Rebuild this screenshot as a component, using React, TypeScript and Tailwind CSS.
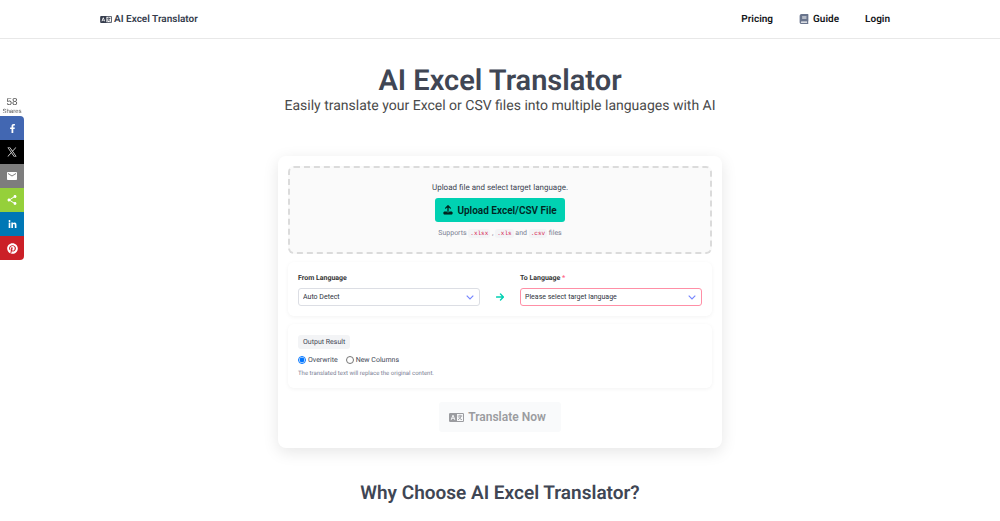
import { useState } from "react";
import type { ReactNode } from "react";
import { FaBook, FaFacebookF, FaLinkedinIn, FaPinterest } from "react-icons/fa";
import { MdEmail, MdShare } from "react-icons/md";

function XLogo() {
  return (
    <svg viewBox="0 0 24 24" className="size-[10px]" fill="currentColor" aria-hidden="true">
      <path d="M14.1 10.3 22.3 1h-1.9l-7.1 8.1L7.6 1H1l8.6 12.2L1 23h1.9l7.5-8.6 6 8.6H23zm-2.7 3-.9-1.2L3.6 2.4h3l5.6 7.8.9 1.2 7.3 10.2h-3z" />
    </svg>
  );
}

function UploadIcon() {
  return (
    <svg viewBox="0 0 20 20" className="size-[10px]" fill="none" stroke="currentColor" strokeWidth="2.6" strokeLinecap="round" strokeLinejoin="round" aria-hidden="true">
      <path d="M10 12.5V2M5.2 6.2 10 1.6l4.8 4.6" />
      <path d="M7.2 13.6H2.8A1.5 1.5 0 0 0 1.3 15v2.2a1.5 1.5 0 0 0 1.5 1.5h14.4a1.5 1.5 0 0 0 1.5-1.5V15a1.5 1.5 0 0 0-1.5-1.4h-4.4l-1 1.4H8.2z" fill="currentColor" strokeWidth="1" />
    </svg>
  );
}

function TranslateIcon({ className }: { className: string }) {
  return (
    <svg viewBox="0 0 30 18" className={className} aria-hidden="true">
      <path
        fill="currentColor"
        fillRule="evenodd"
        d="M2.5 0h25A2.5 2.5 0 0 1 30 2.5v13a2.5 2.5 0 0 1-2.5 2.5h-25A2.5 2.5 0 0 1 0 15.5v-13A2.5 2.5 0 0 1 2.5 0zM16 2v14h11.5a.5.5 0 0 0 .5-.5v-13a.5.5 0 0 0-.5-.5zM7.1 4 3.4 13.6h2.1l.7-2h3.6l.7 2h2.1L8.9 4zM8 6.6l1.2 3.4H6.8z"
      />
      <path d="M18.2 6h7.6M22 4.2V6M24.2 6c-.5 3-2.6 5.800-5.6 7.2M19.8 8.600c1 2 2.9 3.7 5.4 4.6" fill="none" stroke="currentColor" strokeWidth="1.8" strokeLinecap="round" />
    </svg>
  );
}

const shares: { name: string; color: string; icon: ReactNode }[] = [
  { name: "Facebook", color: "bg-[#4267b2] rounded-tr-sm", icon: <FaFacebookF className="size-[9px]" /> },
  { name: "X", color: "bg-black", icon: <XLogo /> },
  { name: "Email", color: "bg-[#7d7d7d]", icon: <MdEmail className="size-3" /> },
  { name: "Share", color: "bg-[#95d03a]", icon: <MdShare className="size-3" /> },
  { name: "LinkedIn", color: "bg-[#0077b5]", icon: <FaLinkedinIn className="size-[9px]" /> },
  { name: "Pinterest", color: "bg-[#cb2027] rounded-br-sm", icon: <FaPinterest className="size-[11px]" /> },
];

function ShareBar() {
  return (
    <aside className="fixed top-24 left-0 flex w-6 flex-col font-['Liberation_Sans',sans-serif] text-[#555]">
      <div className="flex h-5 flex-col items-center">
        <span className="text-[10px] leading-[14px]">58</span>
        <span className="text-[6px] leading-[4px]">Shares</span>
      </div>
      {shares.map((s) => (
        <button key={s.name} type="button" aria-label={s.name} className={`flex h-6 w-full items-center justify-center text-white ${s.color}`}>
          {s.icon}
        </button>
      ))}
    </aside>
  );
}

function LanguageSelect({ id, label, placeholder, options, required }: { id: string; label: string; placeholder: string; options: string[]; required?: boolean }) {
  return (
    <div className="min-w-0 flex-1">
      <label htmlFor={id} className="block text-[7px] leading-3 font-bold text-[#363636]">
        {label}
        {required && <span className="text-[#ff6685]"> *</span>}
      </label>
      <div className="relative mt-1">
        <select
          id={id}
          defaultValue=""
          className={`block h-[18px] w-full appearance-none rounded-[3px] border bg-white px-1 text-[7px] leading-4 text-[#2e333d] ${required ? "border-[#ff8fa6]" : "border-[#dcdee4]"}`}
        >
          <option value="">{placeholder}</option>
          {options.map((o) => (
            <option key={o}>{o}</option>
          ))}
        </select>
        <svg viewBox="0 0 8 5" className="pointer-events-none absolute top-[7px] right-1.5 h-[5px] w-2" fill="none" stroke="#7585ff" strokeWidth="1.1" aria-hidden="true">
          <path d="m.7.7 3.3 3.3L7.3.7" />
        </svg>
      </div>
    </div>
  );
}

const panel = "rounded-md bg-white px-[10px] shadow-[0_1px_4px_rgba(10,10,10,0.05)]";
const codeTag = "rounded-[3px] bg-[#f3f4f6] px-0.5 py-px font-['Liberation_Mono',monospace] text-[6px] text-[#d6204e]";

export default function App() {
  const [mode, setMode] = useState("overwrite");
  return (
    <div className="min-h-screen bg-white font-[Roboto,sans-serif] text-[#404654] [text-rendering:geometricPrecision]">
      <header className="border-b border-[#e8e8e8]">
        <div className="mx-auto flex h-[38px] w-4/5 items-center justify-between">
          <a href="#home" className="flex items-center gap-0.5 text-[10px] font-semibold text-[#363d4d]">
            <TranslateIcon className="h-[7px] w-3" />
            AI Excel Translator
          </a>
          <nav className="flex items-center gap-[26px] pr-[10px] text-[10px] font-semibold text-[#14161a]">
            <a href="#pricing">Pricing</a>
            <a href="#guide" className="flex items-center gap-1">
              <FaBook className="size-[10px] text-[#69748c]" />
              Guide
            </a>
            <a href="#login">Login</a>
          </nav>
        </div>
      </header>

      <ShareBar />

      <main className="flex flex-col items-center pt-[26px]">
        <h1 className="text-[29px] leading-8 font-semibold">AI Excel Translator</h1>
        <p className="text-[14px] leading-[18px] text-[#4a4a4a]">Easily translate your Excel or CSV files into multiple languages with AI</p>

        <form className="mt-[41px] w-full max-w-[444px] rounded-lg bg-white p-[10px] pb-4 shadow-[0_4px_16px_rgba(10,10,10,0.1)]" onSubmit={(e) => e.preventDefault()}>
          <section className="flex flex-col items-center rounded-md border-2 border-dashed border-[#dbdbdb] bg-[#fafafa] pt-3.5 pb-3">
            <p className="text-[8px] leading-3">Upload file and select target language.</p>
            <button type="button" className="mt-1 flex h-6 items-center gap-1 rounded-[3px] bg-[#00d1b2] px-2 text-[10px] font-semibold text-[#00251f]">
              <UploadIcon />
              Upload Excel/CSV File
            </button>
            <p className="mt-[5px] text-[7px] leading-3 text-[#7a8194]">
              Supports <code className={codeTag}>.xlsx</code> , <code className={codeTag}>.xls</code> and <code className={codeTag}>.csv</code> files
            </p>
          </section>

          <section className={`${panel} mt-2 flex items-end gap-4 pt-[10px] pb-[10px]`}>
            <LanguageSelect id="from" label="From Language" placeholder="Auto Detect" options={["English", "Spanish"]} />
            <svg viewBox="0 0 8 8" className="mb-[5px] size-2" fill="none" stroke="#00d1b2" strokeWidth="1.4" strokeLinecap="round" strokeLinejoin="round" aria-hidden="true">
              <path d="M.6 4h6.8M4.5 1.1 7.4 4 4.5 6.9" />
            </svg>
            <LanguageSelect id="to" label="To Language" placeholder="Please select target language" options={["English", "Spanish"]} required />
          </section>

          <section className={`${panel} mt-2 pt-[11px] pb-2`}>
            <span className="block w-fit rounded-[3px] bg-[#f3f4f6] px-[5px] text-[7px] leading-[14px]">Output Result</span>
            <div className="mt-[5px] flex gap-2 text-[7px] leading-3">
              <label className="flex items-center gap-0.5">
                <input type="radio" name="mode" className="size-2" checked={mode === "overwrite"} onChange={() => setMode("overwrite")} />
                Overwrite
              </label>
              <label className="flex items-center gap-0.5">
                <input type="radio" name="mode" className="size-2" checked={mode === "columns"} onChange={() => setMode("columns")} />
                New Columns
              </label>
            </div>
            <p className="mt-0.5 text-[6px] leading-3 text-[#7a8194]">The translated text will replace the original content.</p>
          </section>

          <button type="submit" disabled className="mx-auto mt-3.5 flex h-[30px] items-center gap-1 rounded-[3px] bg-[#f9fafb] pr-[15px] pl-[10px] text-[12px] font-semibold text-[#9b9ca0]">
            <TranslateIcon className="h-[9px] w-[15px]" />
            Translate Now
          </button>
        </form>

        <h2 className="mt-[33px] text-[19px] leading-6 font-semibold">Why Choose AI Excel Translator?</h2>
      </main>
    </div>
  );
}
